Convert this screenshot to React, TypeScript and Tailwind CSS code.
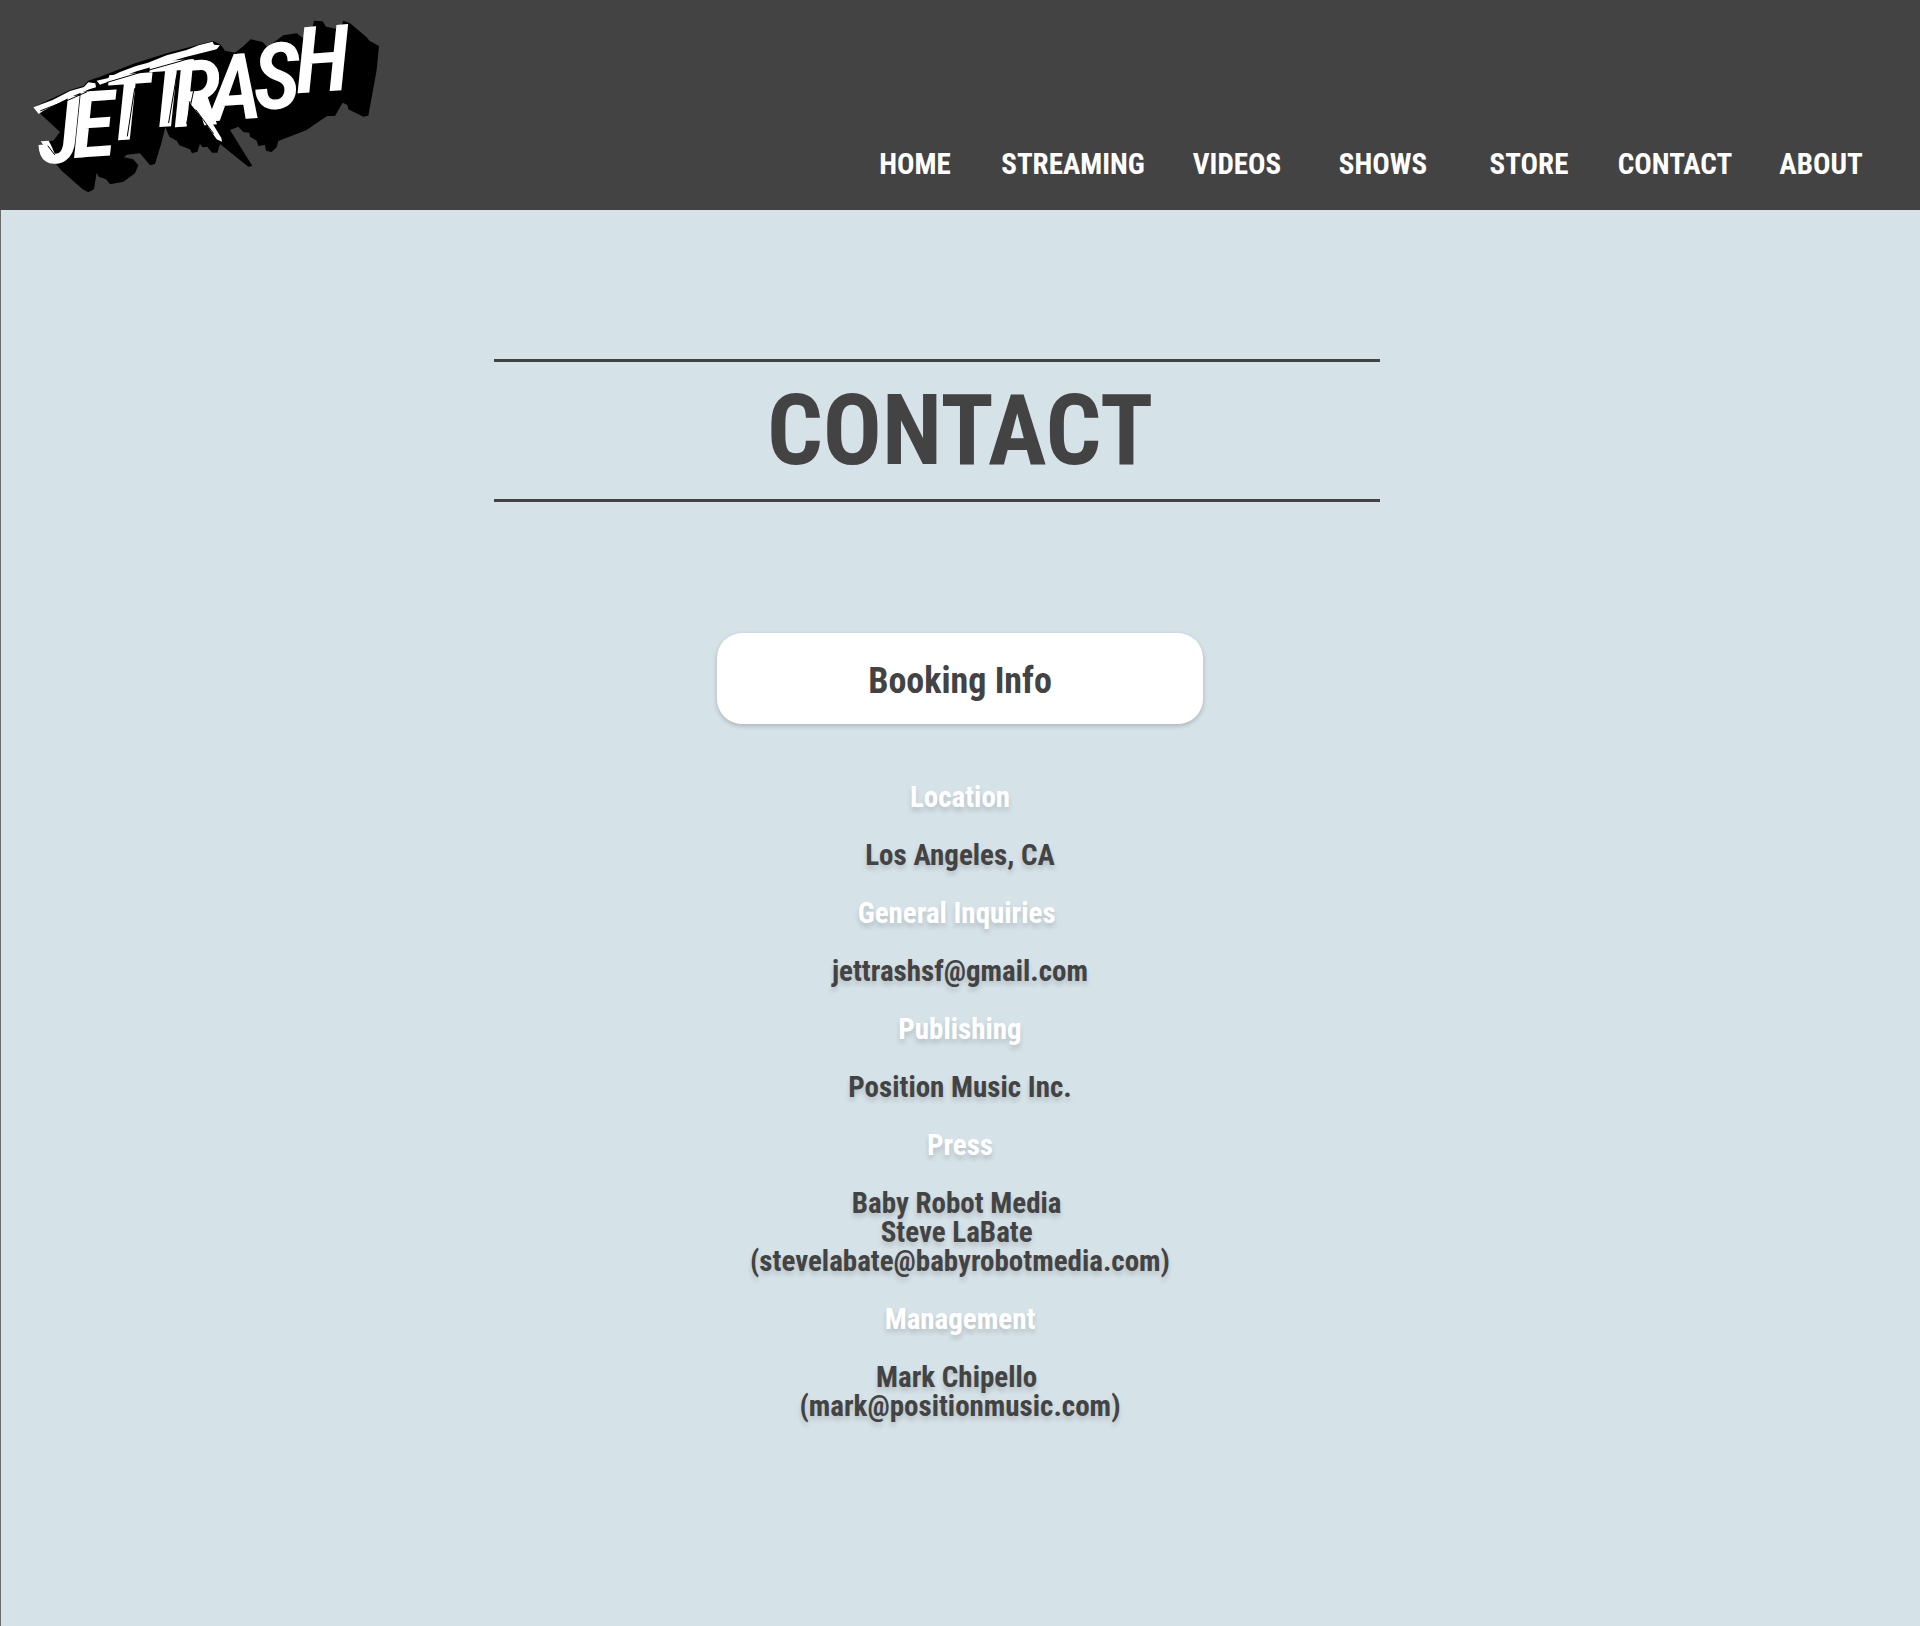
const navItems = [
  { label: 'HOME', width: 'w-[134px]' },
  { label: 'STREAMING', width: 'w-[182px]' },
  { label: 'VIDEOS', width: 'w-[146px]' },
  { label: 'SHOWS', width: 'w-[146px]' },
  { label: 'STORE', width: 'w-[146px]' },
  { label: 'CONTACT', width: 'w-[146px]' },
  { label: 'ABOUT', width: 'w-[146px]' },
];

const NBSP = '\u00a0';

const sections = [
  { title: 'Location', lines: ['Los Angeles, CA'] },
  { title: 'General Inquiries' + NBSP, lines: ['jettrashsf@gmail.com'] },
  { title: 'Publishing', lines: ['Position Music Inc.'] },
  { title: 'Press', lines: ['Baby Robot Media' + NBSP, 'Steve LaBate' + NBSP, '(stevelabate@babyrobotmedia.com)'] },
  { title: 'Management', lines: ['Mark Chipello' + NBSP, '(mark@positionmusic.com)'] },
];

function Logo() {
  return (
    <svg viewBox="0 0 1110 570" className="h-[190px] w-[370px] overflow-visible" role="img" aria-label="Jettrash">
      <path
        d="M40 292 L150 240 L190 228 L205 212 L240 200 L345 160 L440 130 L540 103 L580 93 L602 104 L615 122 L645 128 L668 110 L692 88 L728 96 L742 112 L790 76 L830 70 L868 98 L882 32 L908 34 L918 50 L948 56 L955 72 L970 32 L990 40 L1008 55 L1040 82 L1048 92 L1077 108 L1070 180 L1045 317 L1030 320 L985 298 L982 285 L968 278 L945 318 L922 318 L900 332 L860 360 L775 393 L770 412 L755 426 L738 422 L735 405 L715 408 L710 392 L690 380 L688 368 L670 366 L655 350 L630 360 L697 468 L685 470 L600 402 L592 428 L576 428 L562 410 L548 412 L540 402 L532 425 L516 430 L510 418 L478 406 L470 392 L448 380 L436 352 L424 400 L405 462 L390 466 L360 430 L320 434 L312 442 L340 448 L355 466 L345 490 L310 515 L270 523 L258 508 L236 500 L230 488 L222 538 L205 547 L188 538 L125 482 L90 440 L62 395 L100 392 L120 366 Z"
        fill="#000"
      />
      <text
        className="font-['Roboto_Condensed'] font-semibold italic"
        fill="#fff"
        fontSize="276"
        x="58 160 254 378 462 572 704 830"
        y="462 444 394 354 352 334 300 250"
        rotate="-4"
      >
        JETTRASH
      </text>
      <path d="M62 394 L86 392 L96 412 L108 440 L104 456 L84 428 Z" fill="#fff" />
      <path d="M40 292 L98 270 L150 243 L192 231 L205 217 L226 220 L228 232 L208 238 L150 262 L106 284 L70 302 L56 312 Z" fill="#fff" />
      <path d="M230 212 L262 205 L300 186 L348 168 L384 158 L440 136 L500 120 L536 106 L578 95 L582 104 L600 106 L590 118 L500 140 L350 184 L240 224 Z" fill="#fff" />
      <path d="M518 262 L532 262 L562 315 L604 384 L606 395 L590 388 L550 330 L510 280 Z" fill="#fff" />
      <g fill="none" stroke="#000" strokeWidth="3" strokeLinecap="round">
        <path d="M62 302 L145 270 L200 246 M262 217 L352 190 L480 154 L596 118" />
        <path d="M84 408 L104 434 M528 300 L580 370" />
        <path d="M344 236 L322 378 M470 196 L446 338 M530 200 L500 340" />
      </g>
    </svg>
  );
}

export default function App() {
  return (
    <div className="min-h-screen bg-[#d5e2e7] font-['Roboto_Condensed','Liberation_Sans',sans-serif] font-bold text-[#434343]">
      <header className="flex items-end justify-between bg-[#434343] pr-[26px] pl-5 text-white">
        <a href="#home" className="mt-[10px] mb-[10px] block">
          <Logo />
        </a>
        <nav className="mb-[28px] flex text-[29px] leading-9">
          {navItems.map((item) => (
            <a key={item.label} href={'#' + item.label.toLowerCase()} className={`${item.width} text-center`}>
              {item.label}
            </a>
          ))}
        </nav>
      </header>

      <main className="flex min-h-[1416px] flex-col items-center border-l border-[#6b6b6b] pr-px">
        <div className="mt-[149px] flex w-full flex-col">
          <hr className="mr-[28.1%] ml-[25.7%] border-t-3 border-[#434343]" />
          <h1 className="my-[19px] text-center text-[98px] leading-[99px]">CONTACT</h1>
          <hr className="mr-[28.1%] ml-[25.7%] border-t-3 border-[#434343]" />
        </div>

        <h2 className="mt-[131px] w-full max-w-[486px] rounded-[25px] bg-white pt-[26px] pb-5 text-center text-[36px] leading-[45px] shadow-[0_2px_5px_rgba(0,0,0,0.2)]">
          Booking Info
        </h2>

        <div className="mt-[59px] flex flex-col gap-[29px] text-center text-[29px] leading-[29px] [text-shadow:0_4px_5px_rgba(0,0,0,0.15)]">
          {sections.map((s) => (
            <section key={s.title} className="flex flex-col gap-[29px]">
              <h3 className="text-white">{s.title}</h3>
              <div>
                {s.lines.map((line) => (
                  <p key={line}>{line}</p>
                ))}
              </div>
            </section>
          ))}
        </div>
      </main>
    </div>
  );
}
